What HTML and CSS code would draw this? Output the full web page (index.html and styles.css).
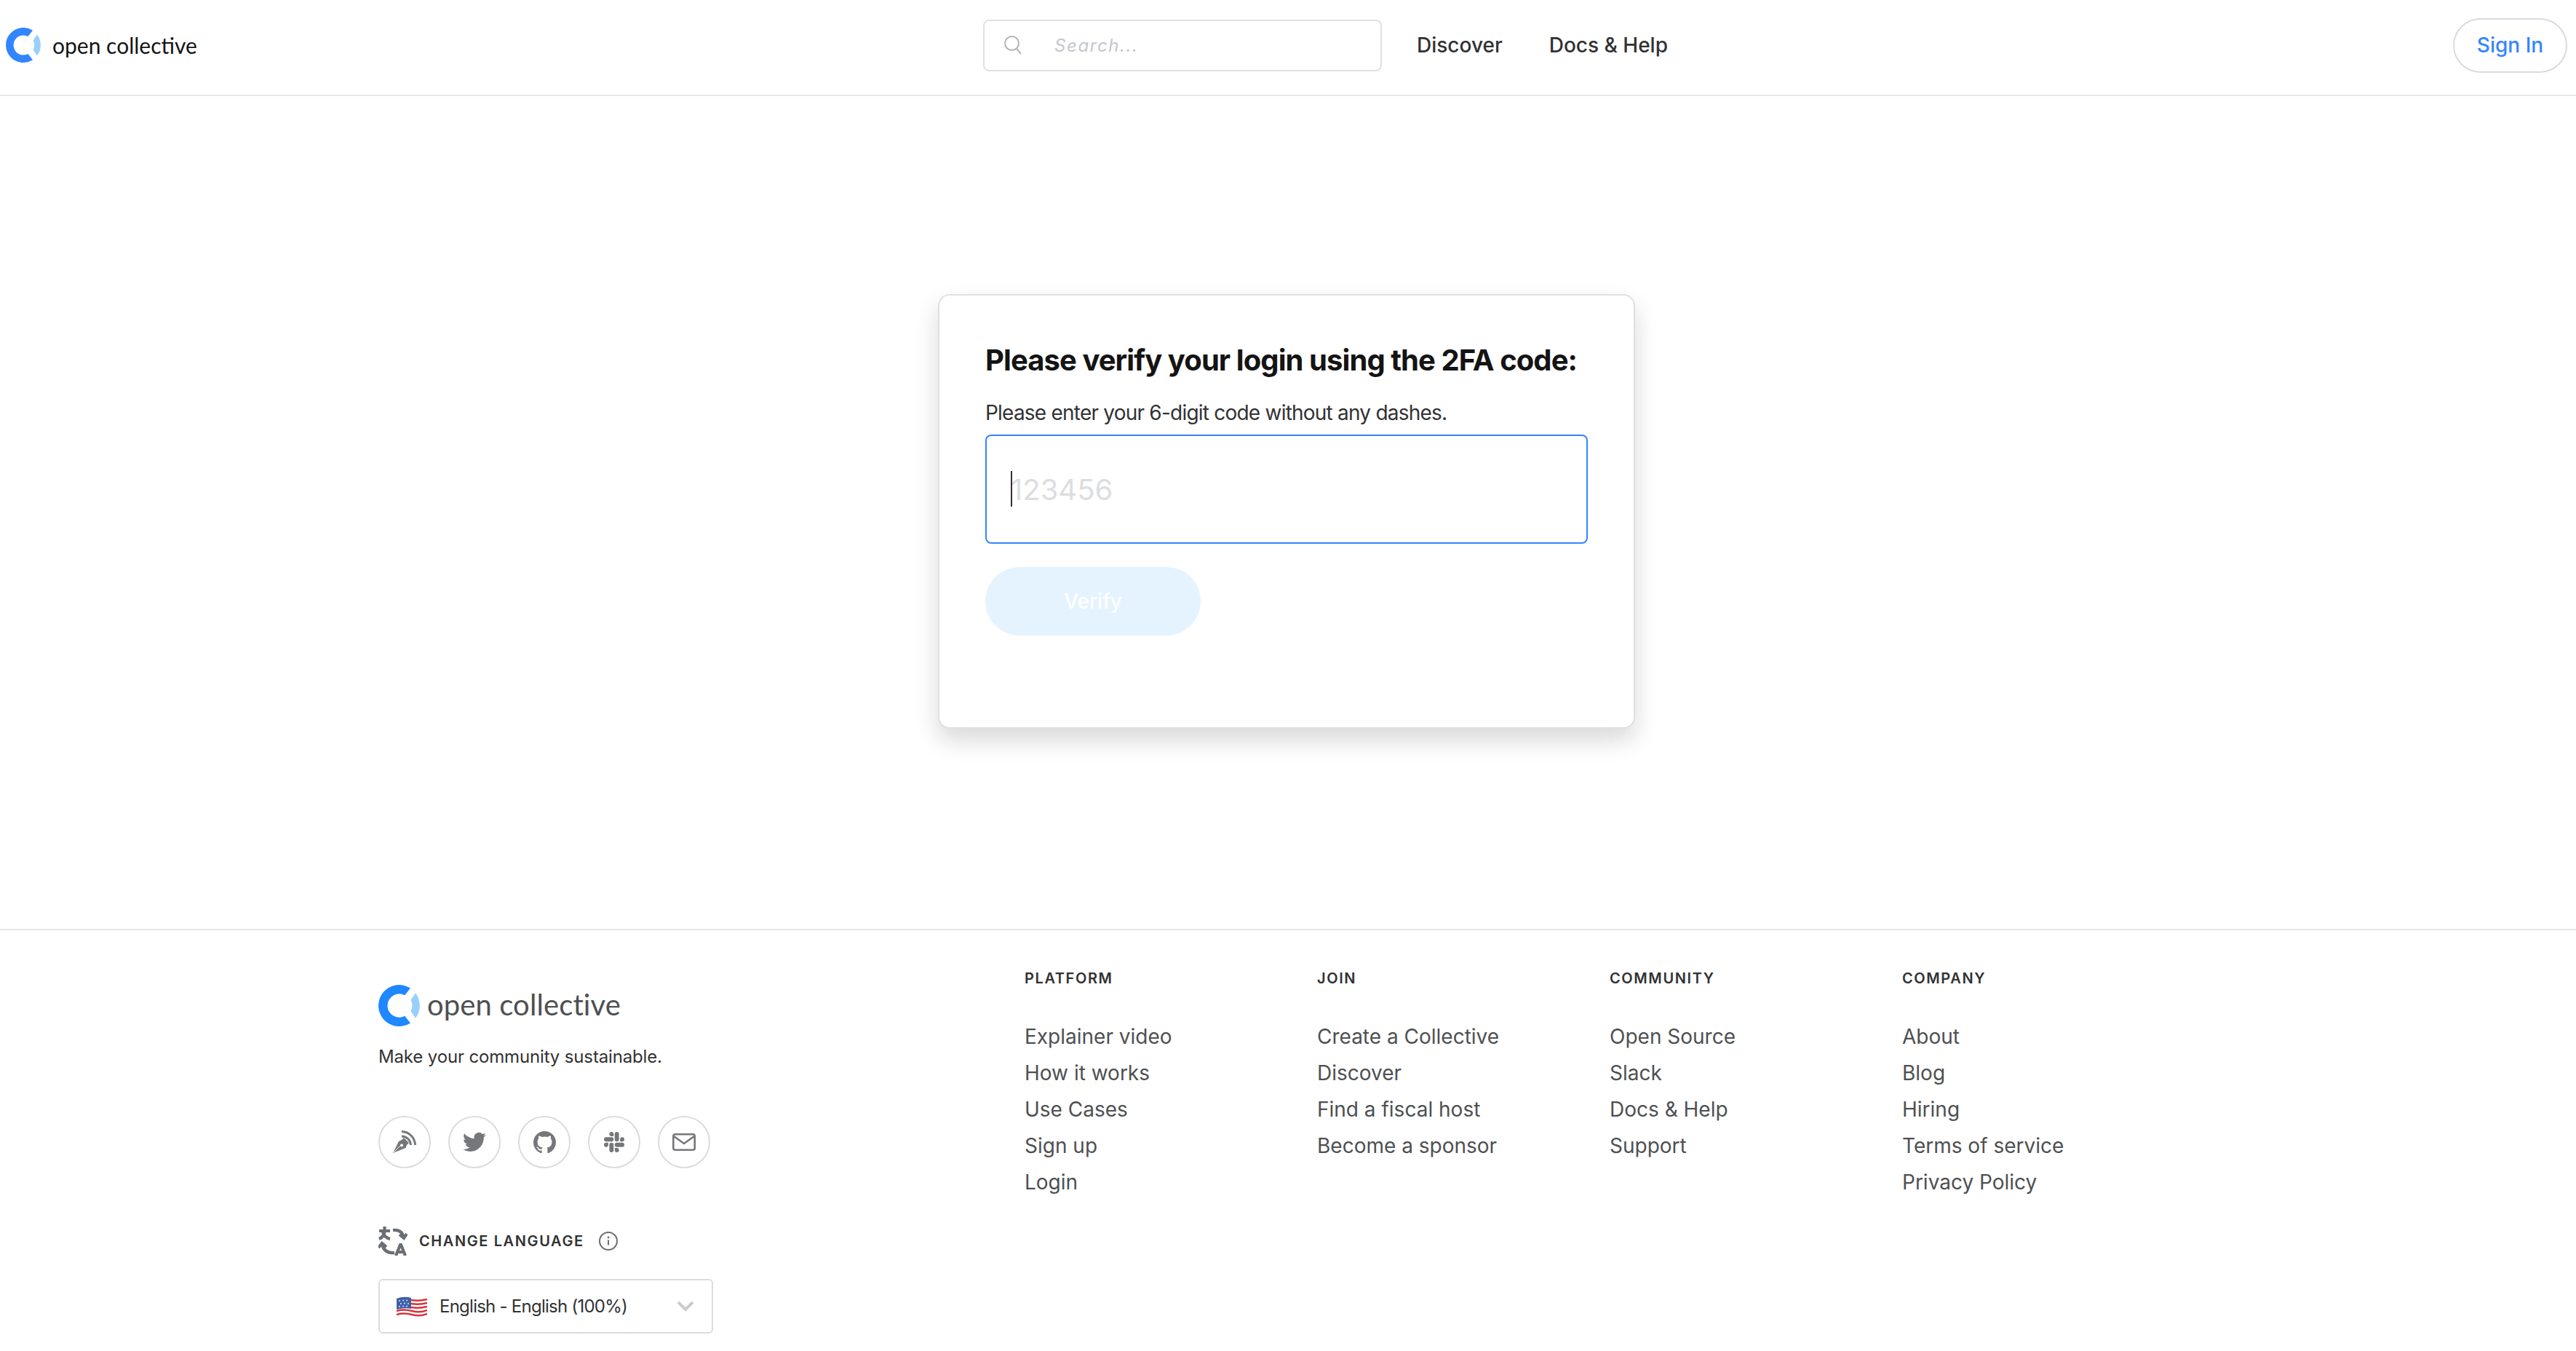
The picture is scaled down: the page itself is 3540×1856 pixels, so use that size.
FILE: index.html
```html
<!DOCTYPE html>
<html lang="en">
<head>
  <meta charset="UTF-8">
  <title>Open Collective - Verify login</title>
  <meta name="viewport" content="width=device-width, initial-scale=1">
  <link rel="stylesheet" href="styles.css">
</head>
<body>
  <header class="topbar">
    <a class="brand" href="#">
      <svg class="brand-icon" viewBox="0 0 48 48"><path fill="#3385ff" d="M37 3.800A24 24 0 1 0 37 44.200L30.500 36A13.600 13.600 0 1 1 30.500 12Z"/><path fill="#99cfff" d="M43 9.500A24 24 0 0 1 43 38.500L37.500 30.500A14 14 0 0 0 37.500 17.500Z"/></svg>
      <span class="brand-name">open collective</span>
    </a>
    <div class="topbar-middle">
      <form class="search">
        <svg class="search-icon" viewBox="0 0 26 26"><circle cx="11.500" cy="10.500" r="9.500" fill="none" stroke="#b4b4b4" stroke-width="2"/><path d="M18 18l6 7" stroke="#b4b4b4" stroke-width="2" fill="none"/></svg>
        <input class="search-input" type="text" placeholder="Search...">
      </form>
      <nav class="topnav">
        <a href="#">Discover</a>
        <a href="#">Docs &amp; Help</a>
      </nav>
    </div>
    <a class="signin" href="#">Sign In</a>
  </header>

  <main class="content">
    <form class="card">
      <h1>Please verify your login using the 2FA code:</h1>
      <label class="code-label" for="code">Please enter your 6-digit code without any dashes.</label>
      <div class="code-field">
        <input class="code-input" id="code" type="text" placeholder="123456">
        <span class="caret"></span>
      </div>
      <button class="verify" type="button" disabled>Verify</button>
    </form>
  </main>

  <footer class="footer">
    <div class="footer-left">
      <a class="brand brand-footer" href="#">
        <svg class="brand-icon" viewBox="0 0 48 48"><path fill="#1f87ff" d="M37 3.800A24 24 0 1 0 37 44.200L30.500 36A13.600 13.600 0 1 1 30.500 12Z"/><path fill="#99cfff" d="M43 9.500A24 24 0 0 1 43 38.500L37.500 30.500A14 14 0 0 0 37.500 17.500Z"/></svg>
        <span class="brand-name">open collective</span>
      </a>
      <p class="tagline">Make your community sustainable.</p>
      <div class="socials">
        <a href="#" aria-label="Blog">
          <svg class="ic-blog" viewBox="0 0 32 32"><path fill="#76777a" fill-rule="evenodd" d="M0 31L8 15L12 13L15 10L22 17L19 20L17.500 24ZM12 18.500a2 2 0 1 0 .01 0Z"/><path stroke="#fff" stroke-width="1" d="M1 30L9.500 21.500"/><path fill="none" stroke="#76777a" stroke-width="3" d="M12 1.500A19 19 0 0 1 30.500 20M12 8A12.500 12.500 0 0 1 24.500 20"/></svg>
        </a>
        <a href="#" aria-label="Twitter">
          <svg class="ic-twitter" viewBox="0 0 24 24"><path fill="#76777a" d="M23.953 4.57a10 10 0 01-2.825.775 4.958 4.958 0 002.163-2.723c-.951.555-2.005.959-3.127 1.184a4.92 4.92 0 00-8.384 4.482C7.69 8.095 4.067 6.13 1.64 3.162a4.822 4.822 0 00-.666 2.475c0 1.71.87 3.213 2.188 4.096a4.904 4.904 0 01-2.228-.616v.06a4.923 4.923 0 003.946 4.827 4.996 4.996 0 01-2.212.085 4.936 4.936 0 004.604 3.417 9.867 9.867 0 01-6.102 2.105c-.39 0-.779-.023-1.17-.067a13.995 13.995 0 007.557 2.209c9.053 0 13.998-7.496 13.998-13.985 0-.21 0-.42-.015-.63A9.935 9.935 0 0024 4.59z"/></svg>
        </a>
        <a href="#" aria-label="GitHub">
          <svg class="ic-github" viewBox="0 0 16 16"><path fill="#76777a" d="M8 0C3.58 0 0 3.58 0 8c0 3.54 2.29 6.53 5.47 7.59.4.07.55-.17.55-.38 0-.19-.01-.82-.01-1.49-2.01.37-2.53-.49-2.69-.94-.09-.23-.48-.94-.82-1.13-.28-.15-.68-.52-.01-.53.63-.01 1.08.58 1.23.82.72 1.21 1.87.87 2.33.66.07-.52.28-.87.51-1.07-1.78-.2-3.64-.89-3.64-3.95 0-.87.31-1.59.82-2.15-.08-.2-.36-1.02.08-2.12 0 0 .67-.21 2.2.82.64-.18 1.32-.27 2-.27.68 0 1.36.09 2 .27 1.53-1.04 2.2-.82 2.2-.82.44 1.1.16 1.92.08 2.12.51.56.82 1.27.82 2.15 0 3.07-1.87 3.75-3.65 3.95.29.25.54.73.54 1.48 0 1.07-.01 1.93-.01 2.2 0 .21.15.46.55.38A8.013 8.013 0 0016 8c0-4.42-3.58-8-8-8z"/></svg>
        </a>
        <a href="#" aria-label="Slack">
          <svg class="ic-slack" viewBox="0 0 24 24"><path fill="#76777a" d="M5.042 15.165a2.528 2.528 0 0 1-2.52 2.523A2.528 2.528 0 0 1 0 15.165a2.527 2.527 0 0 1 2.522-2.52h2.52v2.52zM6.313 15.165a2.527 2.527 0 0 1 2.521-2.52 2.527 2.527 0 0 1 2.521 2.52v6.313A2.528 2.528 0 0 1 8.834 24a2.528 2.528 0 0 1-2.521-2.522v-6.313zM8.834 5.042a2.528 2.528 0 0 1-2.521-2.52A2.528 2.528 0 0 1 8.834 0a2.528 2.528 0 0 1 2.521 2.522v2.52H8.834zM8.834 6.313a2.528 2.528 0 0 1 2.521 2.521 2.528 2.528 0 0 1-2.521 2.521H2.522A2.528 2.528 0 0 1 0 8.834a2.528 2.528 0 0 1 2.522-2.521h6.312zM18.956 8.834a2.528 2.528 0 0 1 2.522-2.521A2.528 2.528 0 0 1 24 8.834a2.528 2.528 0 0 1-2.522 2.521h-2.522V8.834zM17.688 8.834a2.528 2.528 0 0 1-2.523 2.521 2.527 2.527 0 0 1-2.52-2.521V2.522A2.527 2.527 0 0 1 15.165 0a2.528 2.528 0 0 1 2.523 2.522v6.312zM15.165 18.956a2.528 2.528 0 0 1 2.523 2.522A2.528 2.528 0 0 1 15.165 24a2.527 2.527 0 0 1-2.52-2.522v-2.522h2.52zM15.165 17.688a2.527 2.527 0 0 1-2.52-2.523 2.526 2.526 0 0 1 2.52-2.52h6.313A2.527 2.527 0 0 1 24 15.165a2.528 2.528 0 0 1-2.522 2.523h-6.313z"/></svg>
        </a>
        <a href="#" aria-label="Email">
          <svg class="ic-mail" viewBox="0 0 32 24"><rect x="1.300" y="1.300" width="29.400" height="21.400" rx="2.500" fill="none" stroke="#76777a" stroke-width="2.600"/><path d="M2 4l14 10L30 4" fill="none" stroke="#76777a" stroke-width="2.600"/></svg>
        </a>
      </div>
      <div class="lang-title">
        <svg class="ic-translate" viewBox="0 0 40 40">
          <g fill="none" stroke="#6b6e72" stroke-width="4.200">
            <path d="M1 6h15M8.500 0v6c0 5-3 9-7.500 11M6 8c1 4 5 8 10 9"/>
            <path d="M20 5c8-1 13 2 15 10M29 11l6 5 4-6"/>
            <path d="M22 36C13 37 7 33 5 24M0 29l5-6 6 5"/>
            <path d="M24 40l6-15h1l6 15M26 35h9"/>
          </g>
        </svg>
        <span class="lang-label">Change language</span>
        <svg class="ic-info" viewBox="0 0 26 26"><circle cx="13" cy="13" r="12" fill="none" stroke="#6b6e72" stroke-width="2"/><path d="M13 11.500v7" stroke="#6b6e72" stroke-width="2"/><circle cx="13" cy="8" r="1.400" fill="#6b6e72"/></svg>
      </div>
      <button class="lang-select" type="button">
        <svg class="flag" viewBox="0 0 42 32">
          <path fill="#fff" d="M0 5q10-4 21-1t21-2v26q-10 4-21 1T0 31z"/>
          <g fill="none" stroke="#d8333c" stroke-width="2.500">
            <path d="M20 7q11 2 22-1M20 12q11 2 22-1M20 17q11 2 22-1M0 22q10-3 21 0t21-1M0 27q10-3 21 0t21-1"/>
          </g>
          <path fill="#3f5fa8" d="M0 5q10-4 20-1v15q-10-2-20 1z"/>
          <g fill="#dfe6f5"><circle cx="4" cy="8" r="1"/><circle cx="9" cy="7.500" r="1"/><circle cx="14" cy="7.500" r="1"/><circle cx="6" cy="12" r="1"/><circle cx="11" cy="11.500" r="1"/><circle cx="16" cy="12" r="1"/><circle cx="4" cy="16" r="1"/><circle cx="9" cy="15.500" r="1"/><circle cx="14" cy="15.500" r="1"/></g>
        </svg>
        <span class="lang-value">English - English (100%)</span>
        <svg class="chevron" viewBox="0 0 24 15"><path d="M2 2l10 10L22 2" fill="none" stroke="#cccccc" stroke-width="4"/></svg>
      </button>
    </div>

    <div class="footer-links">
      <div class="link-col">
        <h3>Platform</h3>
        <a href="#">Explainer video</a>
        <a href="#">How it works</a>
        <a href="#">Use Cases</a>
        <a href="#">Sign up</a>
        <a href="#">Login</a>
      </div>
      <div class="link-col">
        <h3>Join</h3>
        <a href="#">Create a Collective</a>
        <a href="#">Discover</a>
        <a href="#">Find a fiscal host</a>
        <a href="#">Become a sponsor</a>
      </div>
      <div class="link-col">
        <h3>Community</h3>
        <a href="#">Open Source</a>
        <a href="#">Slack</a>
        <a href="#">Docs &amp; Help</a>
        <a href="#">Support</a>
      </div>
      <div class="link-col">
        <h3>Company</h3>
        <a href="#">About</a>
        <a href="#">Blog</a>
        <a href="#">Hiring</a>
        <a href="#">Terms of service</a>
        <a href="#">Privacy Policy</a>
      </div>
    </div>
  </footer>
</body>
</html>
```

FILE: styles.css
```css
* {
  box-sizing: border-box;
}
body {
  margin: 0;
  min-height: 100vh;
  display: flex;
  flex-direction: column;
  font-family: Inter, 'Noto Sans', sans-serif;
  color: #313233;
  background: #fff;
}
a {
  color: inherit;
  text-decoration: none;
}

/* top bar */
.topbar {
  height: 132px;
  flex: none;
  display: flex;
  align-items: center;
  justify-content: space-between;
  padding: 0 12px 6px 8px;
  border-bottom: 2px solid #e6e8eb;
}
.brand {
  display: flex;
  align-items: center;
  width: 263px;
}
.brand-icon {
  width: 48px;
  height: 48px;
  flex: none;
}
.brand-name {
  font-family: Lato, sans-serif;
  font-size: 30px;
  line-height: 40px;
  margin-left: 16px;
  color: #141414;
  white-space: nowrap;
}
.topbar-middle {
  display: flex;
  align-items: center;
  margin-left: 1080px;
  margin-right: auto;
}
.search {
  width: 548px;
  height: 71px;
  display: flex;
  align-items: center;
  padding-left: 26px;
  border: 2px solid #dfe1e4;
  border-radius: 8px;
}
.search-icon {
  width: 26px;
  height: 26px;
  flex: none;
}
.search-input {
  border: 0;
  outline: 0;
  flex: 1;
  min-width: 0;
  margin-left: 44px;
  padding: 0;
  font: italic 400 24px Inter, sans-serif;
  letter-spacing: 1.6px;
  background: none;
}
.search-input::placeholder {
  color: #c4c7cc;
  opacity: 1;
}
.topnav {
  display: flex;
  gap: 64px;
  margin-left: 48px;
  font-size: 28px;
  font-weight: 500;
  color: #313233;
}
.signin {
  width: 157px;
  height: 75px;
  display: flex;
  align-items: center;
  justify-content: center;
  border: 2px solid #d7dbe0;
  border-radius: 38px;
  font-size: 28px;
  font-weight: 500;
  color: #3385ff;
}

/* login card */
.content {
  flex: 1;
  display: flex;
  align-items: center;
  justify-content: center;
}
.card {
  width: 958px;
  height: 597px;
  padding: 61px 63px 0;
  margin-left: -4px;
  margin-top: -3px;
  border: 2px solid #e0e0e0;
  border-radius: 16px;
  box-shadow: 0 16px 32px rgba(20, 20, 20, 0.16);
  background: #fff;
}
.card h1 {
  margin: 0;
  font-size: 40px;
  line-height: 56px;
  font-weight: 700;
  letter-spacing: -0.93px;
  color: #141414;
  white-space: nowrap;
}
.code-label {
  display: block;
  margin-top: 26px;
  font-size: 28px;
  line-height: 36px;
  letter-spacing: -0.78px;
  color: #313233;
}
.code-field {
  position: relative;
  margin-top: 12px;
}
.code-input {
  display: block;
  width: 100%;
  height: 150px;
  padding: 0 33px;
  border: 2px solid #3385ff;
  border-radius: 8px;
  outline: 0;
  font: 400 40px Inter, sans-serif;
}
.code-input::placeholder {
  color: #dcdee0;
  opacity: 1;
}
.caret {
  position: absolute;
  left: 35px;
  top: 50px;
  width: 2px;
  height: 49px;
  background: #313233;
}
.verify {
  display: block;
  width: 296px;
  height: 94px;
  margin-top: 32px;
  border: 0;
  border-radius: 47px;
  background: #e5f3ff;
  color: #fff;
  font: 500 28px Inter, sans-serif;
}

/* footer */
.footer {
  flex: none;
  height: 580px;
  display: flex;
  padding: 0 0 0 520px;
  border-top: 2px solid #e6e8eb;
}
.footer-left {
  width: 888px;
  padding-top: 75px;
}
.brand-footer {
  width: auto;
}
.brand-footer .brand-icon {
  width: 57px;
  height: 57px;
}
.brand-footer .brand-name {
  font-size: 40px;
  line-height: 50px;
  margin-left: 10px;
  margin-bottom: 3px;
  letter-spacing: 0.1px;
  color: #4e5052;
}
.tagline {
  margin: 26px 0 0;
  font-size: 24px;
  line-height: 32px;
  letter-spacing: -0.15px;
  color: #313233;
}
.socials {
  display: flex;
  gap: 24px;
  margin-top: 65px;
}
.socials a {
  width: 72px;
  height: 72px;
  display: flex;
  align-items: center;
  justify-content: center;
  border: 2px solid #dcdcdc;
  border-radius: 50%;
}
.ic-blog { width: 32px; height: 32px; }
.ic-twitter { width: 32px; height: 32px; }
.ic-github { width: 31px; height: 31px; }
.ic-slack { width: 28px; height: 28px; }
.ic-mail { width: 32px; height: 24px; }
.lang-title {
  display: flex;
  align-items: center;
  margin-top: 80px;
}
.ic-translate {
  width: 40px;
  height: 40px;
  flex: none;
}
.lang-label {
  margin-left: 16px;
  font-size: 20px;
  line-height: 40px;
  font-weight: 600;
  letter-spacing: 1.6px;
  text-transform: uppercase;
  color: #313233;
}
.ic-info {
  width: 26px;
  height: 26px;
  margin-left: 20px;
}
.lang-select {
  width: 460px;
  height: 75px;
  display: flex;
  align-items: center;
  margin-top: 32px;
  padding: 0 24px 0 23px;
  border: 2px solid #dcdcdc;
  border-radius: 6px;
  background: #fff;
  font-family: inherit;
}
.flag {
  width: 42px;
  height: 32px;
  flex: none;
}
.lang-value {
  margin-left: 17px;
  font-size: 24px;
  letter-spacing: -0.75px;
  color: #313233;
}
.chevron {
  width: 24px;
  height: 15px;
  margin-left: auto;
}
.footer-links {
  display: grid;
  grid-template-columns: repeat(4, 402px);
  padding-top: 52px;
}
.link-col {
  display: flex;
  flex-direction: column;
  align-items: flex-start;
}
.link-col h3 {
  margin: 0 0 41px;
  font-size: 20px;
  line-height: 28px;
  font-weight: 600;
  letter-spacing: 1.6px;
  text-transform: uppercase;
  color: #313233;
}
.link-col a {
  font-size: 28px;
  line-height: 50px;
  color: #4e5052;
}
```
